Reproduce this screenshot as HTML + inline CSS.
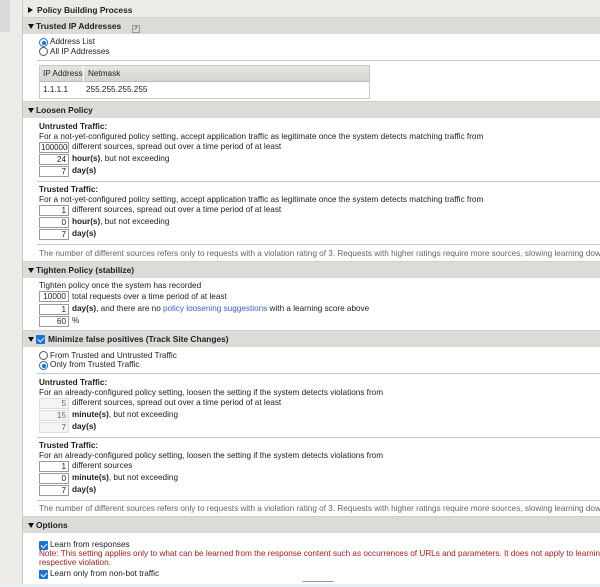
<!DOCTYPE html>
<html><head><style>
*{margin:0;padding:0;box-sizing:border-box}
html{overflow:hidden}
body{width:600px;height:587px;overflow:hidden;background:#ecebe8;font-family:"Liberation Sans",sans-serif;font-size:8.2px;color:#222;position:relative}
.a{position:absolute;white-space:nowrap;line-height:10px}
.b{font-weight:bold}
.hd{position:absolute;left:23px;width:577px;height:17px;background:#dcdbd8;border-top:1px solid #cfcfcc;font-weight:bold;font-size:8.4px;line-height:16px;padding-left:13px;overflow:hidden}
.tri{position:absolute;left:5px;top:6px;width:0;height:0;border-left:3.5px solid transparent;border-right:3.5px solid transparent;border-top:5px solid #111}
.sep{position:absolute;left:37px;right:0;height:1px;background:#c8c8c6}
.in{position:absolute;left:39px;width:30px;height:11px;border:1px solid #9a9a9a;background:#fff;text-align:right;padding-right:2px;line-height:9px;font-size:8.2px;overflow:hidden}
.in.d{background:#f4f4f4;border-color:#ddd;color:#666}
.rd{position:absolute;width:9px;height:9px;border-radius:50%;border:1px solid #555;background:#fff}
.rd.on{border-color:#1a6fd0}
.rd.on::after{content:"";position:absolute;left:1.5px;top:1.5px;width:4px;height:4px;border-radius:50%;background:#1a6fd0}
.cb{position:absolute;width:9px;height:9px;background:#1a73d8;border-radius:1px}
.cb::after{content:"";position:absolute;left:2.5px;top:0.5px;width:3px;height:5px;border:solid #fff;border-width:0 1.5px 1.5px 0;transform:rotate(45deg)}
.g{color:#666}
.r{color:#a02020}
</style></head><body>
<div style="position:absolute;left:0;top:0;width:10px;height:32px;background:#d9d9d7"></div>
<div style="position:absolute;left:22px;top:0;width:1px;height:587px;background:#c8c8c6"></div>
<div style="position:absolute;left:23px;top:34px;width:577px;height:550px;background:#fff"></div>
<div style="position:absolute;left:0;top:584px;width:600px;height:3px;background:#e9eef3"></div>

<div class="a b" style="left:28px;top:5px;font-size:8.4px"><span style="display:inline-block;width:0;height:0;border-top:3.5px solid transparent;border-bottom:3.5px solid transparent;border-left:5px solid #111;margin-right:4px"></span>Policy Building Process</div>

<div class="hd" style="top:17px"><div class="tri"></div>Trusted IP Addresses <span style="display:inline-block;width:8px;height:8px;border:1px solid #999;margin-left:8px;vertical-align:-1px;font-size:6px;line-height:6px;text-align:center;color:#777">↗</span></div>
<div class="rd on" style="left:39px;top:38px"></div><div class="a" style="left:50px;top:37px">Address List</div>
<div class="rd" style="left:39px;top:47px"></div><div class="a" style="left:50px;top:47px">All IP Addresses</div>
<div class="sep" style="top:60px"></div>
<div style="position:absolute;left:39px;top:65px;width:331px;height:34px;border:1px solid #c8c8c6">
<div style="height:16px;background:linear-gradient(#e6e5e2,#d6d5d2);border-bottom:1px solid #bbb;line-height:15px"><span style="padding-left:3px">IP Address</span><span style="position:absolute;left:43px;top:0;height:16px;border-left:1px solid #fff;padding-left:4px">Netmask</span></div>
<div style="line-height:16px;padding-left:3px">1.1.1.1<span style="position:absolute;left:46px">255.255.255.255</span></div></div>

<div class="hd" style="top:101px"><div class="tri"></div>Loosen Policy</div>
<div class="a b" style="left:39px;top:122px">Untrusted Traffic:</div>
<div class="a" style="left:39px;top:132px">For a not-yet-configured policy setting, accept application traffic as legitimate once the system detects matching traffic from</div>
<div class="in" style="top:142px;padding-right:0;text-align:left;padding-left:1px;font-size:7.9px">1000000</div><div class="a" style="left:72px;top:142px">different sources, spread out over a time period of at least</div>
<div class="in" style="top:154px">24</div><div class="a" style="left:72px;top:154px"><b>hour(s)</b>, but not exceeding</div>
<div class="in" style="top:166px">7</div><div class="a" style="left:72px;top:166px"><b>day(s)</b></div>
<div class="sep" style="top:181px"></div>
<div class="a b" style="left:39px;top:185px">Trusted Traffic:</div>
<div class="a" style="left:39px;top:195px">For a not-yet-configured policy setting, accept application traffic as legitimate once the system detects matching traffic from</div>
<div class="in" style="top:205px">1</div><div class="a" style="left:72px;top:205px">different sources, spread out over a time period of at least</div>
<div class="in" style="top:217px">0</div><div class="a" style="left:72px;top:217px"><b>hour(s)</b>, but not exceeding</div>
<div class="in" style="top:229px">7</div><div class="a" style="left:72px;top:229px"><b>day(s)</b></div>
<div class="sep" style="top:244px"></div>
<div class="a g" style="left:39px;top:249px">The number of different sources refers only to requests with a violation rating of 3. Requests with higher ratings require more sources, slowing learning down, and requ</div>

<div class="hd" style="top:261px"><div class="tri"></div>Tighten Policy (stabilize)</div>
<div class="a" style="left:39px;top:281px">Tighten policy once the system has recorded</div>
<div class="in" style="top:291px">10000</div><div class="a" style="left:72px;top:292px">total requests over a time period of at least</div>
<div class="in" style="top:304px">1</div><div class="a" style="left:72px;top:304px"><b>day(s)</b>, and there are no <span style="color:#3a5fc8">policy loosening suggestions</span> with a learning score above</div>
<div class="in" style="top:316px">60</div><div class="a" style="left:72px;top:316px">%</div>

<div class="hd" style="top:330px;padding-left:25px"><div class="tri"></div><div class="cb" style="left:13px;top:4px"></div>Minimize false positives (Track Site Changes)</div>
<div class="rd" style="left:39px;top:351px"></div><div class="a" style="left:50px;top:351px">From Trusted and Untrusted Traffic</div>
<div class="rd on" style="left:39px;top:361px"></div><div class="a" style="left:50px;top:360px">Only from Trusted Traffic</div>
<div class="sep" style="top:373px"></div>
<div class="a b" style="left:39px;top:378px">Untrusted Traffic:</div>
<div class="a" style="left:39px;top:388px">For an already-configured policy setting, loosen the setting if the system detects violations from</div>
<div class="in d" style="top:398px">5</div><div class="a" style="left:72px;top:398px">different sources, spread out over a time period of at least</div>
<div class="in d" style="top:410px">15</div><div class="a" style="left:72px;top:410px"><b>minute(s)</b>, but not exceeding</div>
<div class="in d" style="top:422px">7</div><div class="a" style="left:72px;top:422px"><b>day(s)</b></div>
<div class="sep" style="top:437px"></div>
<div class="a b" style="left:39px;top:441px">Trusted Traffic:</div>
<div class="a" style="left:39px;top:451px">For an already-configured policy setting, loosen the setting if the system detects violations from</div>
<div class="in" style="top:461px">1</div><div class="a" style="left:72px;top:461px">different sources</div>
<div class="in" style="top:473px">0</div><div class="a" style="left:72px;top:473px"><b>minute(s)</b>, but not exceeding</div>
<div class="in" style="top:485px">7</div><div class="a" style="left:72px;top:485px"><b>day(s)</b></div>
<div class="sep" style="top:500px"></div>
<div class="a g" style="left:39px;top:504px">The number of different sources refers only to requests with a violation rating of 3. Requests with higher ratings require more sources, slowing learning down, and requ</div>

<div class="hd" style="top:516px"><div class="tri"></div>Options</div>
<div class="cb" style="left:39px;top:541px"></div><div class="a" style="left:50px;top:540px">Learn from responses</div>
<div class="a r" style="left:39px;top:549px">Note: This setting applies only to what can be learned from the response content such as occurrences of URLs and parameters. It does not apply to learning from viola</div>
<div class="a r" style="left:39px;top:558px">respective violation.</div>
<div class="cb" style="left:39px;top:570px"></div><div class="a" style="left:50px;top:569px">Learn only from non-bot traffic</div>
<div style="position:absolute;left:302px;top:581px;width:32px;height:3px;border-top:1px solid #999;border-radius:2px"></div>
</body></html>
